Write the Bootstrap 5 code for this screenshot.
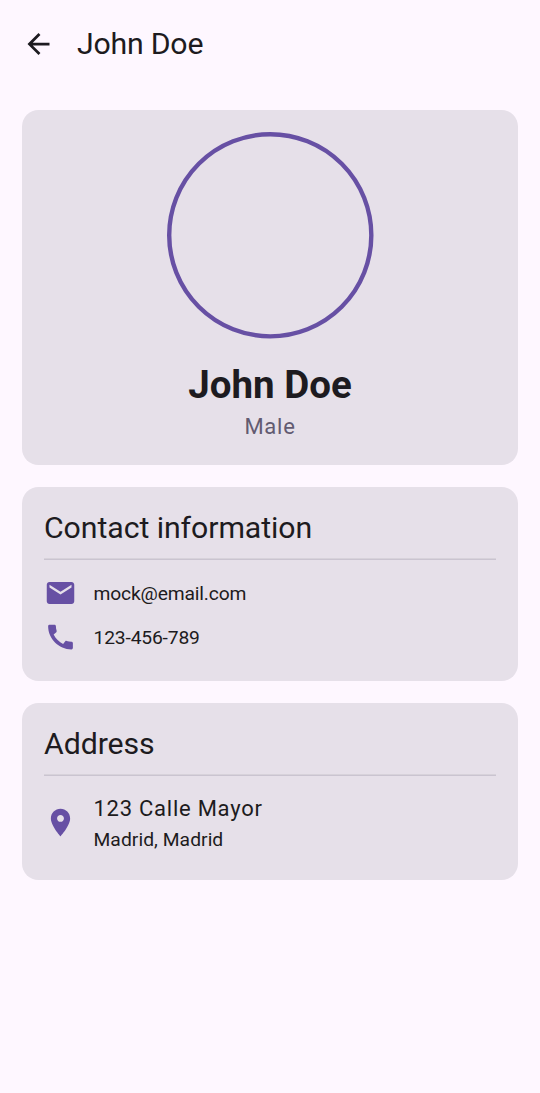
<!DOCTYPE html>
<html lang="en">
<head>
<meta charset="utf-8">
<meta name="viewport" content="width=device-width, initial-scale=1">
<title>John Doe</title>
<link href="https://cdn.jsdelivr.net/npm/bootstrap@5.3.0/dist/css/bootstrap.min.css" rel="stylesheet">
<style>
:root { --dp: 1.375px; --primary: #6750a4; --ink: #1d1b20; }
body { background: #fef7ff; color: var(--ink); font-family: Roboto, "Noto Sans", sans-serif; }
.top-bar { height: 88px; padding: 0 22px; gap: 22px; }
.title-large { font-size: calc(22 * var(--dp)); line-height: calc(28 * var(--dp)); font-weight: 400; letter-spacing: -.07px; }
.top-bar .title-large { letter-spacing: -.22px; }
.headline { font-size: calc(28 * var(--dp)); line-height: calc(36 * var(--dp)); font-weight: 700; }
.body-large { font-size: 22px; line-height: 33px; letter-spacing: .75px; }
.street { line-height: 32px; margin-bottom: 1px; }
.body-medium { font-size: calc(14 * var(--dp)); line-height: calc(20 * var(--dp)); }
.tight { letter-spacing: -.16px; }
.locality { letter-spacing: .06px; }
.muted { color: #625b71; }
.content { padding: 22px; gap: 22px; }
.panel { background: #e6e0e9; border-radius: 16.5px; padding: 22px; border: 0; color: inherit; }
.avatar { width: 206.25px; height: 206.25px; margin-bottom: 22px; overflow: visible; }
.divider { height: 2px; margin: 10.5px 0 11.5px; background: linear-gradient(#d7d2da 50%, #cac4d0 50%); }
.info-row { padding: 5.5px 0; gap: 16.5px; }
.info-row:last-child { margin-bottom: -.6px; }
.glyph { width: 33px; height: 33px; flex: none; fill: var(--primary); }
.glyph-ink { fill: var(--ink); }
</style>
</head>
<body>
<header class="top-bar d-flex align-items-center">
  <svg class="glyph glyph-ink" viewBox="0 .36 24 24" role="img" aria-label="Back"><path d="M20 11H7.83l5.59-5.59L12 4l-8 8 8 8 1.41-1.41L7.83 13H20v-2z"/></svg>
  <h1 class="title-large m-0">John Doe</h1>
</header>
<main class="content d-flex flex-column">
  <section class="card panel align-items-center">
    <svg class="avatar" viewBox="0 0 150 150"><circle cx="75.1" cy="75.1" r="73.5" fill="none" stroke="#6750a4" stroke-width="3.2"/></svg>
    <h2 class="headline m-0">John Doe</h2>
    <div class="body-large muted">Male</div>
  </section>
  <section class="card panel">
    <h2 class="title-large m-0">Contact information</h2>
    <div class="divider"></div>
    <div class="info-row d-flex align-items-center">
      <svg class="glyph" viewBox="0 .36 24 24"><path d="M20 4H4c-1.1 0-1.99.9-1.99 2L2 18c0 1.1.9 2 2 2h16c1.1 0 2-.9 2-2V6c0-1.1-.9-2-2-2zm0 4l-8 5-8-5V6l8 5 8-5v2z"/></svg>
      <span class="body-medium tight">mock@email.com</span>
    </div>
    <div class="info-row d-flex align-items-center">
      <svg class="glyph" viewBox="0 .36 24 24"><path d="M20.01 15.38c-1.23 0-2.42-.2-3.53-.56-.35-.12-.74-.03-1.01.24l-1.57 1.97c-2.83-1.35-5.48-3.9-6.89-6.83l1.95-1.66c.27-.28.35-.67.24-1.02-.37-1.11-.56-2.3-.56-3.53 0-.54-.45-.99-.99-.99H4.19C3.65 3 3 3.24 3 3.99 3 13.28 10.73 21 20.01 21c.71 0 .99-.63.99-1.18v-3.45c0-.54-.45-.99-.99-.99z"/></svg>
      <span class="body-medium tight">123-456-789</span>
    </div>
  </section>
  <section class="card panel">
    <h2 class="title-large m-0">Address</h2>
    <div class="divider"></div>
    <div class="info-row d-flex align-items-center">
      <svg class="glyph" viewBox="0 0 24 24"><path d="M12 2C8.13 2 5 5.13 5 9c0 5.25 7 13 7 13s7-7.75 7-13c0-3.87-3.13-7-7-7zm0 9.5c-1.38 0-2.5-1.12-2.5-2.5s1.12-2.5 2.5-2.5 2.5 1.12 2.5 2.5-1.12 2.5-2.5 2.5z"/></svg>
      <div>
        <div class="body-large street">123 Calle Mayor</div>
        <div class="body-medium locality">Madrid, Madrid</div>
      </div>
    </div>
  </section>
</main>
<script src="https://cdn.jsdelivr.net/npm/bootstrap@5.3.0/dist/js/bootstrap.bundle.min.js"></script>
</body>
</html>
